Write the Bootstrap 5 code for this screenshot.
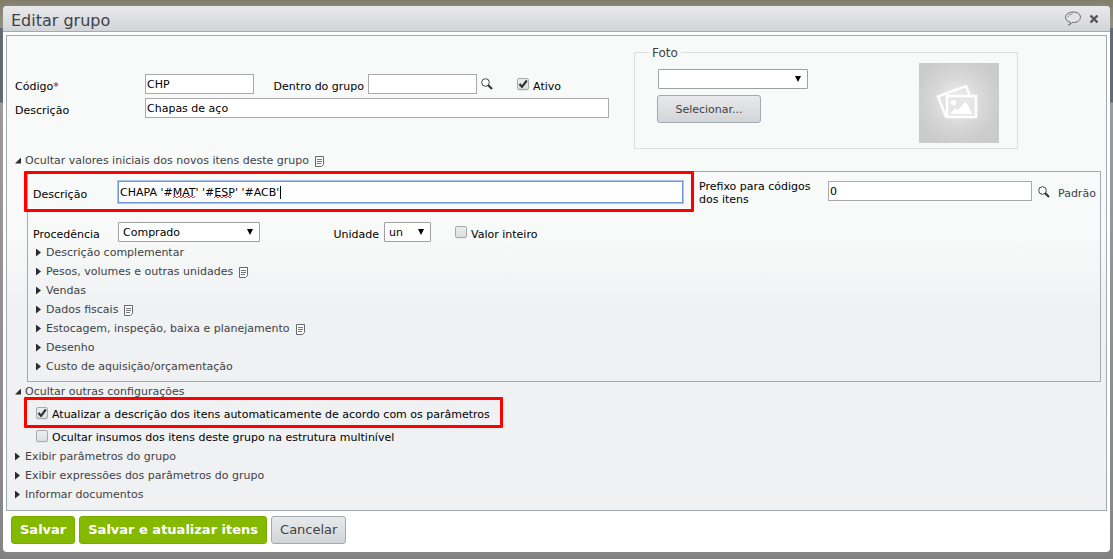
<!DOCTYPE html>
<html lang="pt-BR">
<head>
<meta charset="utf-8">
<meta name="viewport" content="width=device-width, initial-scale=1">
<title>Editar grupo</title>
<link href="https://cdn.jsdelivr.net/npm/bootstrap@5.3.0/dist/css/bootstrap.min.css" rel="stylesheet">
<style>
  :root { --line: #a2a9b3; --ink: #3f4145; --face: linear-gradient(#e9e9eb, #d2d5d8); }
  body {
    font: 11px/19px "DejaVu Sans", Verdana, sans-serif;
    color: #000; min-height: 100vh; padding: 6px 3px 7px;
    background: linear-gradient(#807c68 0, #8e8b7c 28px, #56606e 28px, #56606e 102px, #999 103px, #808080 100%);
  }
  .dialog-box { border-radius: 4px; background: #fff; box-shadow: 0 0 8px #aaa6; padding-bottom: 8px; }
  .dialog-head { height: 26px; padding: 0 11px 0 8px; background: var(--face); border-bottom: 1px solid var(--line); border-radius: 4px 4px 0 0; }
  .dialog-head h1 { font: 16px/30px "DejaVu Sans", Verdana, sans-serif; height: 26px; color: var(--ink); }
  .icon-btn { border: 0; padding: 0; background: none; line-height: 0; color: #555; }
  .panel { margin: 3px 3px 5px; padding: 0 5px 6px 8px; border: 1px solid var(--line); background: linear-gradient(#f8faf9 0 200px, #f0f1f3 270px); }
  .top-grid { display: grid; grid-template-columns: 619fr 384fr 83fr; height: 115px; }
  .main-fields { padding: 38px 25px 0 0; }
  .line { height: 20px; }
  .line label { line-height: 16px; padding-top: 5px; }
  .required { color: #8a1010; }
  .box-in { height: 20px; border: 1px solid #a9a9a9; padding: 0 1px; color: #000; background: #fff; min-width: 0; font: inherit; line-height: 18px; }
  .w-code { width: 109px; }
  .box-sel { height: 20px; border: 1px solid #a0a0a0; border-radius: 1px; padding: 1px 18px 0 4px; font: inherit; line-height: 18px; color: #000; appearance: none;
    background: #fff url("data:image/svg+xml,%3Csvg xmlns='http://www.w3.org/2000/svg' width='8' height='6'%3E%3Cpath d='M1 0h6L4 6z'/%3E%3C/svg%3E") no-repeat right 5px center; }
  .w-origin { width: 142px; }
  .w-unit { width: 47px; }
  .lbl-main { width: 130px; }
  .lbl-sub { width: 85px; }
  .tick { appearance: none; width: 12px; height: 12px; margin: 0; border: 1px solid #aaa; border-radius: 2px; background: linear-gradient(#eee, #ddd); flex: none; box-shadow: 0 1px 1px #0001; }
  .tick:checked { background: url("data:image/svg+xml,%3Csvg xmlns='http://www.w3.org/2000/svg' viewBox='0 0 10 10'%3E%3Cpath d='M1.5 5L4 7.800L8.800 1.500' fill='none' stroke='%23333' stroke-width='2.200'/%3E%3C/svg%3E") center/10px no-repeat, linear-gradient(#eee, #ddd); }
  .photo { margin-top: 16px; height: 97px; border: 1px solid #dcdfdf; padding: 0 18px 0 23px; position: relative; }
  .photo legend { position: absolute; top: -9px; left: 14px; width: auto; margin: 0; padding: 0 3px; font: 12px/18px "DejaVu Sans", Verdana, sans-serif; color: var(--ink); background: #f8faf9; }
  .photo-ctl { padding-top: 16px; }
  .photo-ctl .box-sel { width: 150px; }
  .btn-face { background: var(--face); border: 1px solid #a2a9b3; border-radius: 3px; color: var(--ink); }
  .btn-pick { width: 104px; height: 28px; margin: 6px 0 0 -1px; font: inherit; padding: 2px 0 0; line-height: 24px; }
  .thumb { width: 80px; height: 80px; margin-top: 10px; background: radial-gradient(circle at 39px 38px, #e9e9e9 8px, #d8d8d8 24px, #cbcbcb 44px); }
  .fold { display: flex; align-items: center; height: 19px; padding: 0; border: 0; background: none; color: var(--ink); text-align: left; }
  .fold::before { content: ""; width: 5px; height: 8px; margin-right: 5px; background: #2b2c2e; clip-path: polygon(0 0, 100% 50%, 0 100%); flex: none; }
  .fold.is-open::before { width: 6px; height: 6px; margin-right: 4px; clip-path: polygon(100% 0, 100% 100%, 0 100%); }
  .fold svg { margin: 2px 0 0 6px; }
  .nest { border: 1px solid var(--line); margin: 1px 0 0 12px; padding: 0 5px 5px; }
  .flag { position: relative; }
  .flag::after { content: ""; position: absolute; border: 3px solid #f00; border-radius: 1px; pointer-events: none; inset: -1px -11px -1px -9px; }
  .desc-wrap { height: 39px; padding: 9px 0 0; }
  .box-in.is-focus { height: 22px; line-height: 20px; border: 1px solid #6f96d8; box-shadow: 0 0 0 1px #a9c3ee; outline: 0;
    background: #fff url("data:image/svg+xml,%3Csvg xmlns='http://www.w3.org/2000/svg' width='180' height='20'%3E%3Cpath d='M54 15l2-2 2 2 2-2 2 2 2-2 2 2 2-2 2 2 2-2 2 2 2-2M95 15l2-2 2 2 2-2 2 2 2-2 2 2 2-2 2 2 2-2' fill='none' stroke='%23e33'/%3E%3Cpath d='M161.500 3v13' stroke='%23000'/%3E%3C/svg%3E") no-repeat 0 1px; }
  .prefix { width: 129px; line-height: 13px; padding-top: 8px; }
  .prefix-in { width: 204px; margin-top: 9px; }
  .lens-gap { margin: 0 8px 0 6px; }
  .std { width: 37px; padding-top: 12px; color: var(--ink); text-decoration: none; }
  .origin { margin-top: 11px; margin-bottom: 1px; }
  .unit { width: 124px; padding-right: 5px; text-align: right; }
  .folds { padding-left: 3px; }
  .checks { padding: 0 0 0 21px; }
  .checks > div { height: 23px; max-width: 452px; gap: 4px; }
  .checks label { padding-top: 3px; white-space: nowrap; }
  .checks .flag::after { inset: -4px -15px -4px -12px; }
  .actions { margin: 0 8px; gap: 4px; }
  .actions .btn { font: 13px/26px "DejaVu Sans", Verdana, sans-serif; padding: 0 8px; height: 28px; border-radius: 3px; }
  .actions .btn-go { font-weight: bold; color: #fff; background: #84b900; border: 1px solid #78ad00; }
</style>
</head>
<body>
<svg class="d-none">
  <symbol id="lens" viewBox="0 0 12 12"><circle cx="4.500" cy="4.500" r="3.800" fill="#fff" stroke="#444"/><path d="M7 7l4 4" stroke="#333" stroke-width="2.200"/></symbol>
  <symbol id="note" viewBox="0 0 9 11"><path d="M.5.5h8v8l-2 2h-6z" fill="#fbfbfb" stroke="#66696d"/><path d="M2 3.500h5M2 5.500h5M2 7.500h4" stroke="#777" fill="none"/></symbol>
</svg>
<main class="dialog-box">
  <header class="dialog-head d-flex align-items-center">
    <h1 class="mb-0 flex-grow-1">Editar grupo</h1>
    <button class="icon-btn me-2" aria-label="Comentários"><svg width="16" height="15" viewBox="0 0 16 15"><path d="M3.500 14c1.200-.6 1.900-1.400 1.800-2.800C2.500 10.500.6 8.800.6 6.400.6 3.200 4 1 8.200 1s7.200 2.100 7.200 5.200-3 5.300-7 5.300H7.200C6.200 12.900 5 13.700 3.500 14z" fill="#e2e3e5" stroke="#666"/><path d="M3 6c.5-1.600 2-2.700 4.500-3" fill="none" stroke="#888"/></svg></button>
    <button class="icon-btn" aria-label="Fechar"><svg width="10" height="10" viewBox="0 0 10 10"><path d="M1.500 1.500l7 7m0-7l-7 7" stroke="#555" stroke-width="2.400"/></svg></button>
  </header>

  <form>
    <div class="panel">
      <div class="top-grid">
        <div class="main-fields">
          <div class="line d-flex mb-1">
            <label class="lbl-main" for="codigo">Código<span class="required">*</span></label>
            <input class="box-in w-code" id="codigo" value="CHP">
            <label class="ms-auto pe-1" for="dentro">Dentro do grupo</label>
            <input class="box-in w-code" id="dentro">
            <button type="button" class="icon-btn ms-1" aria-label="Pesquisar grupo"><svg width="12" height="12"><use href="#lens"/></svg></button>
            <div class="d-flex align-items-center gap-1 ms-4 me-5">
              <input class="tick" type="checkbox" id="ativo" checked><label for="ativo">Ativo</label>
            </div>
          </div>
          <div class="line d-flex">
            <label class="lbl-main" for="descricao">Descrição</label>
            <input class="box-in flex-grow-1" id="descricao" value="Chapas de aço">
          </div>
        </div>
        <fieldset class="photo">
          <legend>Foto</legend>
          <div class="d-flex justify-content-between">
            <div class="photo-ctl">
              <select class="box-sel d-block" aria-label="Foto"><option></option></select>
              <button type="button" class="btn-face btn-pick">Selecionar...</button>
            </div>
            <div class="thumb"><svg width="80" height="80" viewBox="0 0 80 80" role="img" aria-label="Sem foto">
              <path d="M27 54L19 33.500 47 23l3.500 9" fill="none" stroke="#fff" stroke-width="2.500"/>
              <path d="M28 33h29v21H28z" fill="#e6e6e6" stroke="#fff" stroke-width="2.500"/>
              <circle cx="34.500" cy="39.500" r="2.700" fill="#fff"/>
              <path d="M31 51l5-6 3 2 7-8 3 3 4 9z" fill="#fff"/></svg></div>
          </div>
        </fieldset>
      </div>

      <button type="button" class="fold is-open">Ocultar valores iniciais dos novos itens deste grupo<svg width="9" height="11"><use href="#note"/></svg></button>
      <section class="nest">
        <div class="d-flex">
          <div class="desc-wrap flag d-flex flex-grow-1">
            <label class="lbl-sub pt-1" for="desc-item">Descrição</label>
            <input class="box-in is-focus flex-grow-1" id="desc-item" value="CHAPA '#MAT' '#ESP' '#ACB'" spellcheck="false">
          </div>
          <label class="prefix ms-3" for="prefixo">Prefixo para códigos<br>dos itens</label>
          <input class="box-in prefix-in" id="prefixo" value="0">
          <button type="button" class="icon-btn lens-gap" aria-label="Pesquisar prefixo"><svg width="12" height="12"><use href="#lens"/></svg></button>
          <a class="std" href="#">Padrão</a>
        </div>
        <div class="d-flex line origin">
          <label class="lbl-sub" for="proc">Procedência</label>
          <select class="box-sel w-origin" id="proc"><option>Comprado</option></select>
          <label class="unit" for="un">Unidade</label>
          <select class="box-sel w-unit" id="un"><option>un</option></select>
          <div class="d-flex align-items-center gap-1 ms-4"><input class="tick" type="checkbox" id="inteiro"><label for="inteiro">Valor inteiro</label></div>
        </div>
        <div class="folds">
          <button type="button" class="fold">Descrição complementar</button>
          <button type="button" class="fold">Pesos, volumes e outras unidades<svg width="9" height="11"><use href="#note"/></svg></button>
          <button type="button" class="fold">Vendas</button>
          <button type="button" class="fold">Dados fiscais<svg width="9" height="11"><use href="#note"/></svg></button>
          <button type="button" class="fold">Estocagem, inspeção, baixa e planejamento<svg width="9" height="11"><use href="#note"/></svg></button>
          <button type="button" class="fold">Desenho</button>
          <button type="button" class="fold">Custo de aquisição/orçamentação</button>
        </div>
      </section>

      <button type="button" class="fold is-open">Ocultar outras configurações</button>
      <div class="checks">
        <div class="flag d-flex align-items-center"><input class="tick" type="checkbox" id="atualizar" checked><label for="atualizar">Atualizar a descrição dos itens automaticamente de acordo com os parâmetros</label></div>
        <div class="d-flex align-items-center"><input class="tick" type="checkbox" id="ocultar"><label for="ocultar">Ocultar insumos dos itens deste grupo na estrutura multinível</label></div>
      </div>
      <button type="button" class="fold">Exibir parâmetros do grupo</button>
      <button type="button" class="fold">Exibir expressões dos parâmetros do grupo</button>
      <button type="button" class="fold">Informar documentos</button>
    </div>
    <div class="actions d-flex">
      <button type="button" class="btn btn-go">Salvar</button>
      <button type="button" class="btn btn-go">Salvar e atualizar itens</button>
      <button type="button" class="btn btn-face">Cancelar</button>
    </div>
  </form>
</main>
<script src="https://cdn.jsdelivr.net/npm/bootstrap@5.3.0/dist/js/bootstrap.bundle.min.js"></script>
</body>
</html>
